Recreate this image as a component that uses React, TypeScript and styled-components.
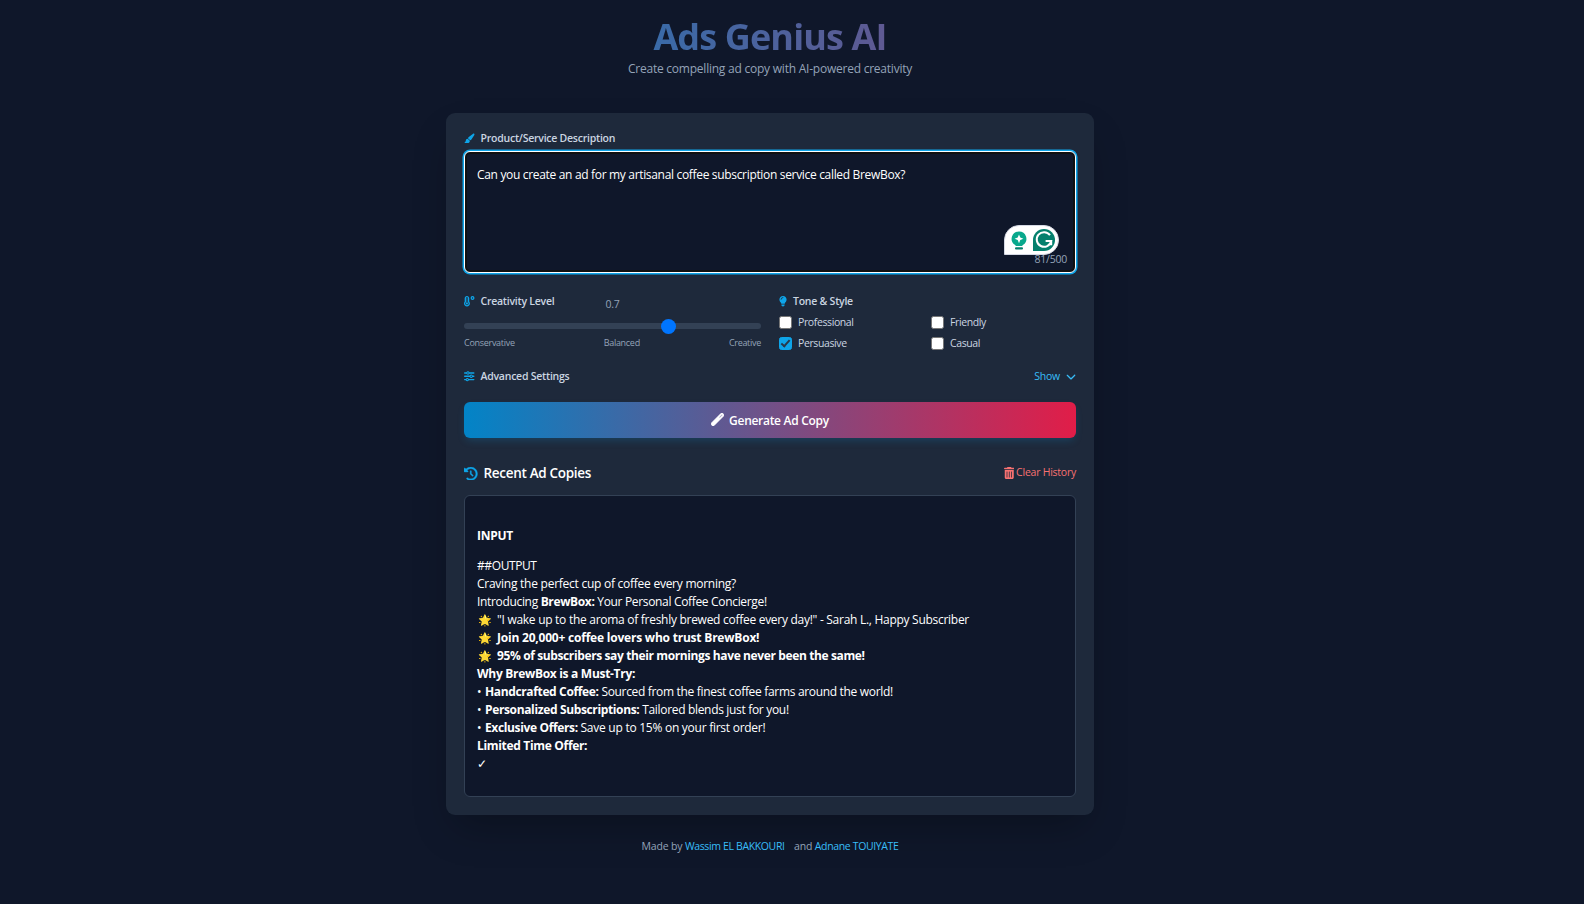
import React, { useState } from "react";
import styled, { createGlobalStyle } from "styled-components";
import {
  FaChevronDown,
  FaClockRotateLeft,
  FaLightbulb,
  FaPaintbrush,
  FaSliders,
  FaTemperatureHigh,
  FaTrashCan,
  FaWandMagic,
} from "react-icons/fa6";

const GlobalStyle = createGlobalStyle`
  *, *::before, *::after { box-sizing: border-box; }
  body {
    margin: 0;
    background: #0f172a;
    color: #fff;
    font-family: "Open Sans", "Noto Sans", sans-serif;
    font-size: 12px;
    line-height: 18px;
    letter-spacing: -0.3px;
  }
  h1, h2, p { margin: 0; }
  button, textarea, input { font: inherit; letter-spacing: inherit; }
`;

const Page = styled.div`
  display: flex;
  flex-direction: column;
  align-items: center;
  min-height: 904px;
  padding: 19px 44px 0 0;
`;

const Header = styled.header`
  width: 648px;
  height: 94px;
  text-align: center;
`;

const Title = styled.h1`
  font-size: 36px;
  line-height: 36px;
  font-weight: 700;
  letter-spacing: -0.87px;
  padding-bottom: 5px;
  color: transparent;
  background: linear-gradient(90deg, #0284c7 -140px, #e11d48 1256px);
  background-clip: text;
  -webkit-background-clip: text;
`;

const Subtitle = styled.p`
  color: #94a3b8;
  letter-spacing: -0.23px;
`;

const Card = styled.main`
  width: 648px;
  height: 702px;
  padding: 18px;
  background: #1e293b;
  border-radius: 9px;
  box-shadow: 0 19px 38px -9px rgba(0, 0, 0, 0.28);
`;

const Label = styled.div<{ $icon?: number }>`
  display: flex;
  align-items: center;
  gap: 6px;
  height: 15px;
  font-size: 10.5px;
  line-height: 15px;
  font-weight: 600;
  letter-spacing: -0.24px;
  color: #cbd5e1;

  svg {
    width: ${(p) => p.$icon ?? 10.5}px;
    height: 10.5px;
    color: #0ea5e9;
  }
`;

const Prompt = styled.div`
  position: relative;
  margin-top: 5px;
  height: 122px;
`;

const PromptInput = styled.textarea`
  display: block;
  width: 100%;
  height: 100%;
  padding: 14px 12px;
  resize: none;
  outline: none;
  color: #fff;
  background: #0f172a;
  border: 1px solid #fff;
  border-radius: 6px;
  box-shadow: 0 0 0 1.5px #0ea5e9, inset 0 0 0 2px #101010;
  letter-spacing: -0.325px;
`;

const Counter = styled.span`
  position: absolute;
  right: 9px;
  bottom: 6px;
  font-size: 10.5px;
  line-height: 15px;
  letter-spacing: -0.22px;
  color: #94a3b8;
`;

const Assistant = styled.div`
  position: absolute;
  right: 17px;
  top: 74px;
  display: flex;
  align-items: center;
  justify-content: space-between;
  width: 55px;
  height: 30px;
  padding: 0 3px 0 6px;
  background: #fff;
  border: 1px solid #d5d9e4;
  border-radius: 15px 15px 15px 0;
`;

const Options = styled.section`
  display: grid;
  grid-template-columns: 1fr 1fr;
  gap: 18px;
  margin-top: 21px;
  height: 75px;
`;

const SliderHead = styled.div`
  display: grid;
  grid-template-columns: 1fr auto 1fr;
  height: 29px;
`;

const SliderValue = styled.span`
  padding-top: 3px;
  font-size: 10.5px;
  line-height: 15px;
  letter-spacing: -0.25px;
  color: #94a3b8;
`;

const Slider = styled.input`
  display: block;
  appearance: none;
  width: 100%;
  height: 6px;
  margin: 0;
  border-radius: 6px;
  background: #334155;

  &::-webkit-slider-thumb {
    appearance: none;
    width: 15px;
    height: 15px;
    border-radius: 50%;
    background: #0075ff;
  }
`;

const Scale = styled.div`
  display: flex;
  justify-content: space-between;
  margin-top: 7px;
  font-size: 9px;
  line-height: 13px;
  letter-spacing: -0.29px;
  color: #94a3b8;
`;

const Tones = styled.div`
  display: grid;
  grid-template-columns: 1fr 1fr;
  gap: 6px 7px;
  margin-top: 6px;
`;

const Tone = styled.label`
  display: flex;
  align-items: center;
  gap: 6px;
  height: 15px;
  font-size: 10.5px;
  line-height: 15px;
  letter-spacing: -0.39px;
  color: #cbd5e1;
`;

const Check = styled.input`
  appearance: none;
  display: grid;
  place-items: center;
  width: 13px;
  height: 13px;
  margin: 0;
  border: 1px solid #767676;
  border-radius: 2.5px;
  background: #fff;

  &:checked {
    border-color: #0ea5e9;
    background: #0ea5e9;
  }
  &:checked::before {
    content: "";
    width: 5px;
    height: 9px;
    margin-top: -2px;
    border: solid #29384a;
    border-width: 0 2px 2px 0;
    transform: rotate(42deg);
  }
`;

const Row = styled.div<{ $height: number }>`
  display: flex;
  align-items: flex-start;
  justify-content: space-between;
  height: ${(p) => p.$height}px;
`;

const TextButton = styled.button<{
  $color: string;
  $gap: number;
  $iconWidth: number;
  $iconHeight: number;
}>`
  display: flex;
  align-items: center;
  gap: ${(p) => p.$gap}px;
  padding: 0;
  border: 0;
  background: none;
  font-size: 10.5px;
  line-height: 15px;
  letter-spacing: -0.24px;
  color: ${(p) => p.$color};

  svg {
    width: ${(p) => p.$iconWidth}px;
    height: ${(p) => p.$iconHeight}px;
  }
`;

const Generate = styled.button`
  display: flex;
  align-items: center;
  justify-content: center;
  gap: 6px;
  width: 100%;
  height: 36px;
  padding: 1px 0 0;
  border: 0;
  border-radius: 6px;
  font-weight: 600;
  letter-spacing: -0.29px;
  color: #fff;
  background: linear-gradient(90deg, #0284c7, #e11d48);
  box-shadow: 0 4px 9px -2px rgba(14, 165, 233, 0.22);

  svg {
    width: 13px;
    height: 13px;
    margin: -2px -1px 0 0;
    stroke: currentColor;
    stroke-width: 24px;
  }
`;

const HistoryTitle = styled.h2`
  display: flex;
  align-items: center;
  gap: 6px;
  font-size: 13.5px;
  line-height: 21px;
  font-weight: 600;
  letter-spacing: -0.31px;

  svg {
    width: 13.5px;
    height: 13.5px;
    color: #0ea5e9;
    stroke: currentColor;
    stroke-width: 12px;
  }
`;

const HistoryHead = styled(Row)`
  margin-top: 25px;

  ${TextButton} {
    margin-top: 2px;
  }
`;

const Output = styled.article`
  height: 302px;
  padding: 31px 12px 29px;
  background: #0f172a;
  border: 1px solid #334155;
  border-radius: 6px;
`;

const Line = styled.p<{ $tracking?: number; $after?: number; $bold?: boolean }>`
  height: 18px;
  margin-bottom: ${(p) => p.$after ?? 0}px;
  white-space: pre;
  font-weight: ${(p) => (p.$bold ? 700 : 400)};
  letter-spacing: ${(p) => p.$tracking ?? -0.29}px;

  b {
    font-weight: 700;
    letter-spacing: -0.36px;
  }
`;

const Bullet = styled.span`
  display: inline-block;
  width: 8px;
`;

const Star = styled.span`
  display: inline-block;
  width: 20px;
  padding-left: 1px;
  font-size: 11px;
  font-weight: 400;
  letter-spacing: 0;
`;

const Footer = styled.footer`
  display: flex;
  gap: 2.5px;
  margin-top: 24px;
  font-size: 10.5px;
  line-height: 15px;
  letter-spacing: -0.16px;
  color: #94a3b8;
`;

const Author = styled.a<{ $after?: number }>`
  color: #38bdf8;
  letter-spacing: -0.36px;
  margin-right: ${(p) => p.$after ?? 0}px;
`;

const TipIcon = () => (
  <svg width="16" height="19" viewBox="0 0 16 19">
    <path
      fill="#08a88c"
      d="M8 .5a7.3 7.3 0 0 0-4.2 13.3L5 15h6l1.200-1.200A7.300 7.300 0 0 0 8 .500Z"
    />
    <path fill="#fff" d="M8 3.400 9.300 6.500 12.400 7.800 9.300 9.100 8 12.200 6.700 9.100 3.600 7.800 6.700 6.500Z" />
    <rect x="4" y="16.200" width="8" height="2.300" rx="1" fill="#04806d" />
  </svg>
);

const CheckerIcon = () => (
  <svg width="22" height="22" viewBox="0 0 22 22">
    <path fill="#04806d" d="M11 0a11 11 0 1 1 0 22H0V11A11 11 0 0 1 11 0Z" />
    <path
      fill="none"
      stroke="#fff"
      strokeWidth="2"
      d="M17 6.200A7.300 7.300 0 1 0 18.200 12H12.600M18.200 11v5.200"
    />
  </svg>
);

const tones = ["Professional", "Friendly", "Persuasive", "Casual"];

export default function App() {
  const [prompt, setPrompt] = useState(
    "Can you create an ad for my artisanal coffee subscription service called BrewBox?"
  );
  const [creativity, setCreativity] = useState(0.7);

  return (
    <>
      <GlobalStyle />
      <Page>
        <Header>
          <Title>Ads Genius AI</Title>
          <Subtitle>Create compelling ad copy with AI-powered creativity</Subtitle>
        </Header>

        <Card>
          <Label>
            <FaPaintbrush />
            Product/Service Description
          </Label>
          <Prompt>
            <PromptInput
              spellCheck={false}
              value={prompt}
              onChange={(e) => setPrompt(e.target.value)}
            />
            <Counter>{prompt.length}/500</Counter>
            <Assistant>
              <TipIcon />
              <CheckerIcon />
            </Assistant>
          </Prompt>

          <Options>
            <div>
              <SliderHead>
                <Label>
                  <FaTemperatureHigh />
                  Creativity Level
                </Label>
                <SliderValue>{creativity}</SliderValue>
              </SliderHead>
              <Slider
                type="range"
                min={0}
                max={1}
                step={0.1}
                value={creativity}
                onChange={(e) => setCreativity(Number(e.target.value))}
              />
              <Scale>
                <span>Conservative</span>
                <span>Balanced</span>
                <span>Creative</span>
              </Scale>
            </div>
            <div>
              <Label $icon={8}>
                <FaLightbulb />
                Tone &amp; Style
              </Label>
              <Tones>
                {tones.map((tone) => (
                  <Tone key={tone}>
                    <Check type="checkbox" defaultChecked={tone === "Persuasive"} />
                    {tone}
                  </Tone>
                ))}
              </Tones>
            </div>
          </Options>

          <Row $height={33}>
            <Label>
              <FaSliders />
              Advanced Settings
            </Label>
            <TextButton $color="#38bdf8" $gap={6} $iconWidth={10} $iconHeight={11}>
              Show
              <FaChevronDown />
            </TextButton>
          </Row>

          <Generate>
            <FaWandMagic />
            Generate Ad Copy
          </Generate>

          <HistoryHead $height={32}>
            <HistoryTitle>
              <FaClockRotateLeft />
              Recent Ad Copies
            </HistoryTitle>
            <TextButton $color="#f87171" $gap={2} $iconWidth={10.5} $iconHeight={12}>
              <FaTrashCan />
              Clear History
            </TextButton>
          </HistoryHead>

          <Output>
            <Line $bold $after={12}>INPUT</Line>
            <Line $tracking={-0.4}>##OUTPUT</Line>
            <Line $tracking={-0.256}>Craving the perfect cup of coffee every morning?</Line>
            <Line $tracking={-0.33}>
              Introducing <b>BrewBox:</b> Your Personal Coffee Concierge!
            </Line>
            <Line $tracking={-0.28}>
              <Star>🌟</Star>"I wake up to the aroma of freshly brewed coffee every day!" - Sarah L., Happy
              Subscriber
            </Line>
            <Line $bold $tracking={-0.21}>
              <Star>🌟</Star>Join 20,000+ coffee lovers who trust BrewBox!
            </Line>
            <Line $bold $tracking={-0.38}>
              <Star>🌟</Star>95% of subscribers say their mornings have never been the same!
            </Line>
            <Line $bold $tracking={-0.3}>Why BrewBox is a Must-Try:</Line>
            <Line $tracking={-0.32}>
              <Bullet>•</Bullet>
              <b>Handcrafted Coffee:</b> Sourced from the finest coffee farms around the world!
            </Line>
            <Line $tracking={-0.32}>
              <Bullet>•</Bullet>
              <b>Personalized Subscriptions:</b> Tailored blends just for you!
            </Line>
            <Line $tracking={-0.26}>
              <Bullet>•</Bullet>
              <b>Exclusive Offers:</b> Save up to 15% on your first order!
            </Line>
            <Line $bold $tracking={-0.32}>Limited Time Offer:</Line>
            <Line>✓</Line>
          </Output>
        </Card>

        <Footer>
          <span>Made by</span>
          <Author $after={7}>Wassim EL BAKKOURI</Author>
          <span>and</span>
          <Author>Adnane TOUIYATE</Author>
        </Footer>
      </Page>
    </>
  );
}
